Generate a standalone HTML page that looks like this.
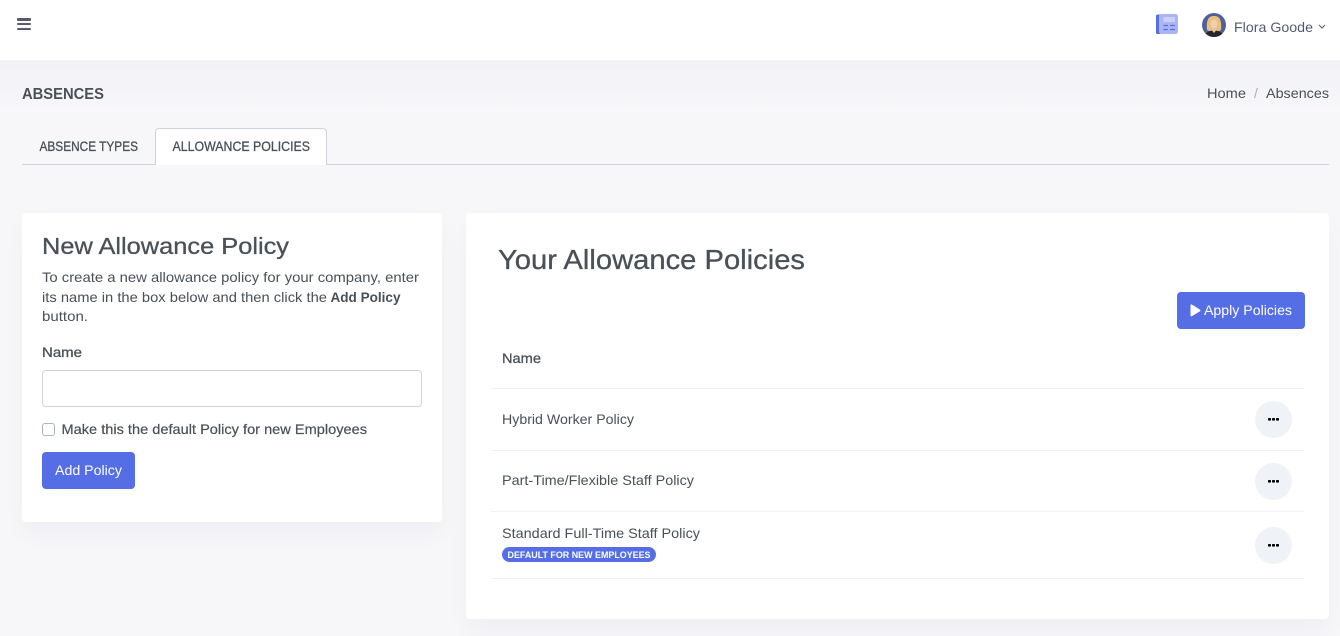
<!DOCTYPE html>
<html><head><meta charset="utf-8"><style>
html,body{margin:0;padding:0;width:1340px;height:636px;overflow:hidden;background:#f7f7fa}
.a{position:absolute;box-sizing:border-box}
svg.t{position:absolute;left:0;top:0}
svg.t text{font-family:"Liberation Sans",sans-serif;fill:#495057}
.b{font-weight:700}
svg.t text.m{stroke:#495057;stroke-width:.3px}
</style></head><body>
<div class="a" style="left:0;top:60px;width:1340px;height:50px;background:linear-gradient(#f2f2f6,#f7f7fa)"></div>
<div class="a" style="left:0;top:0;width:1340px;height:60px;background:#fff"></div>
<div class="a" style="left:17px;top:18px;width:14px;height:2.5px;border-radius:1px;background:#555b6d"></div>
<div class="a" style="left:17px;top:22.7px;width:14px;height:2.5px;border-radius:1px;background:#555b6d"></div>
<div class="a" style="left:17px;top:27.5px;width:14px;height:2.5px;border-radius:1px;background:#555b6d"></div>

<svg class="a" style="left:1150px;top:10px" width="34" height="28" viewBox="0 0 34 28">
<rect x="6" y="4.5" width="5" height="19.5" rx="1.8" fill="#556ee6"/>
<rect x="9" y="4" width="19" height="20" rx="2.5" fill="#a9b5f4"/>
<rect x="13.5" y="7" width="11.5" height="5" rx=".5" fill="#c9d1f9"/>
<path d="M13.5 15.5h4.5M20 15.5h5M13.5 19.5h4.5M20 19.5h5" stroke="#556ee6" stroke-width="1.3"/>
</svg>
<svg class="a" style="left:1202px;top:13px" width="24" height="24" viewBox="0 0 24 24">
<defs><clipPath id="c"><circle cx="12" cy="12" r="12"/></clipPath></defs>
<g clip-path="url(#c)"><rect width="24" height="24" fill="#4f5f9c"/>
<path d="M5 17C4 6 7 3 12 3s8 3 7 14l-2 1H7z" fill="#e9c079"/>
<ellipse cx="12" cy="11" rx="3.4" ry="4.4" fill="#efcfb2"/>
<path d="M2 25c0-5 5-7.5 10-7.5s10 2.500 10 7.500z" fill="#25252b"/>
<path d="M10 15h4v2.500l-2 2.500-2-2.500z" fill="#e6c2a6"/></g>
</svg>
<svg class="a" style="left:1317px;top:23px" width="10" height="8" viewBox="0 0 10 8"><path d="M2 2l3 3 3-3" fill="none" stroke="#555b6d" stroke-width="1"/></svg>

<div class="a" style="left:22px;top:164px;width:1307px;height:1px;background:#ced4da"></div>
<div class="a" style="left:155px;top:128px;width:172px;height:37px;background:#fff;border:1px solid #ced4da;border-bottom:0;border-radius:4px 4px 0 0"></div>

<div class="a" style="left:22px;top:213px;width:420px;height:309px;background:#fff;border-radius:4px;box-shadow:0 12px 24px rgba(18,38,63,.035)"></div>
<div class="a" style="left:466px;top:213px;width:863px;height:406px;background:#fff;border-radius:4px;box-shadow:0 12px 24px rgba(18,38,63,.035)"></div>

<div class="a" style="left:42px;top:370px;width:380px;height:37px;background:#fff;border:1px solid #ced4da;border-radius:4px"></div>
<div class="a" style="left:42px;top:423px;width:13px;height:13px;background:#fff;border:1px solid #adb5bd;border-radius:3px"></div>
<div class="a" style="left:42px;top:452px;width:93px;height:37px;background:#556ee6;border-radius:4px"></div>
<div class="a" style="left:1177px;top:292px;width:128px;height:37px;background:#556ee6;border-radius:4px"></div>
<svg class="a" style="left:1189px;top:304px" width="13" height="13" viewBox="0 0 13 13"><path d="M1.500 1.200c0-.8.7-1 1.300-.7l8.200 5.100c.6.400.6 1.200 0 1.600l-8.200 5c-.6.300-1.300.100-1.300-.7z" fill="#fff"/></svg>

<div class="a" style="left:491px;top:388px;width:813px;height:1px;background:#eff2f7"></div>
<div class="a" style="left:491px;top:450px;width:813px;height:1px;background:#eff2f7"></div>
<div class="a" style="left:491px;top:511px;width:813px;height:1px;background:#eff2f7"></div>
<div class="a" style="left:491px;top:578px;width:813px;height:1px;background:#eff2f7"></div>

<div class="a" style="left:1255px;top:401px;width:37px;height:37px;border-radius:50%;background:#eff2f7"></div>
<div class="a" style="left:1255px;top:463px;width:37px;height:37px;border-radius:50%;background:#eff2f7"></div>
<div class="a" style="left:1255px;top:527px;width:37px;height:37px;border-radius:50%;background:#eff2f7"></div>
<svg class="a" style="left:1255px;top:401px" width="37" height="163" viewBox="0 0 37 163" fill="#000">
<rect x="13" y="17" width="3" height="2.600" rx=".8"/><rect x="17" y="17" width="3" height="2.600" rx=".8"/><rect x="21" y="17" width="3" height="2.600" rx=".8"/>
<rect x="13" y="79" width="3" height="2.600" rx=".8"/><rect x="17" y="79" width="3" height="2.600" rx=".8"/><rect x="21" y="79" width="3" height="2.600" rx=".8"/>
<rect x="13" y="143" width="3" height="2.600" rx=".8"/><rect x="17" y="143" width="3" height="2.600" rx=".8"/><rect x="21" y="143" width="3" height="2.600" rx=".8"/>
</svg>
<div class="a" style="left:502px;top:547px;width:154px;height:15px;border-radius:8px;background:#556ee6"></div>

<svg class="t" width="1340" height="636">
<text x="1234" y="32" font-size="14" textLength="79" lengthAdjust="spacingAndGlyphs" style="fill:#555b6d">Flora Goode</text>
<text class="b" x="22" y="99" font-size="15.500" textLength="82" lengthAdjust="spacingAndGlyphs">ABSENCES</text>
<text x="1207" y="98" font-size="14" textLength="39" lengthAdjust="spacingAndGlyphs">Home</text>
<text x="1254" y="98" font-size="14" style="fill:#a6adb5">/</text>
<text x="1266" y="98" font-size="14" textLength="63" lengthAdjust="spacingAndGlyphs">Absences</text>
<text class="m" x="39.500" y="151" font-size="13.500" textLength="98.500" lengthAdjust="spacingAndGlyphs">ABSENCE TYPES</text>
<text class="m" x="172.500" y="151" font-size="13.500" textLength="137.500" lengthAdjust="spacingAndGlyphs">ALLOWANCE POLICIES</text>
<text class="m" x="42" y="254" font-size="23.500" textLength="247" lengthAdjust="spacingAndGlyphs">New Allowance Policy</text>
<text x="42" y="282" font-size="14" textLength="377" lengthAdjust="spacingAndGlyphs">To create a new allowance policy for your company, enter</text>
<text x="42" y="302" font-size="14" textLength="285" lengthAdjust="spacingAndGlyphs">its name in the box below and then click the</text>
<text class="b" x="330.500" y="302" font-size="14" textLength="70" lengthAdjust="spacingAndGlyphs">Add Policy</text>
<text x="42" y="321" font-size="14" textLength="46" lengthAdjust="spacingAndGlyphs">button.</text>
<text class="m" x="42" y="357" font-size="14" textLength="40" lengthAdjust="spacingAndGlyphs">Name</text>
<text class="m" x="61.500" y="434" font-size="14" textLength="305.500" lengthAdjust="spacingAndGlyphs" style="stroke-width:.2px">Make this the default Policy for new Employees</text>
<text x="55" y="475" font-size="14" textLength="67" lengthAdjust="spacingAndGlyphs" style="fill:#fff">Add Policy</text>
<text class="m" x="498" y="269" font-size="28" textLength="307" lengthAdjust="spacingAndGlyphs">Your Allowance Policies</text>
<text x="1204" y="315" font-size="14" textLength="88" lengthAdjust="spacingAndGlyphs" style="fill:#fff">Apply Policies</text>
<text class="m" x="502" y="363" font-size="14" textLength="39" lengthAdjust="spacingAndGlyphs">Name</text>
<text x="502" y="424" font-size="14" textLength="132" lengthAdjust="spacingAndGlyphs">Hybrid Worker Policy</text>
<text x="502" y="485" font-size="14" textLength="192" lengthAdjust="spacingAndGlyphs">Part-Time/Flexible Staff Policy</text>
<text x="502" y="538" font-size="14" textLength="198" lengthAdjust="spacingAndGlyphs">Standard Full-Time Staff Policy</text>
<text class="b" x="507.500" y="558" font-size="9.500" textLength="143" lengthAdjust="spacingAndGlyphs" style="fill:#fff">DEFAULT FOR NEW EMPLOYEES</text>
</svg>
</body></html>
